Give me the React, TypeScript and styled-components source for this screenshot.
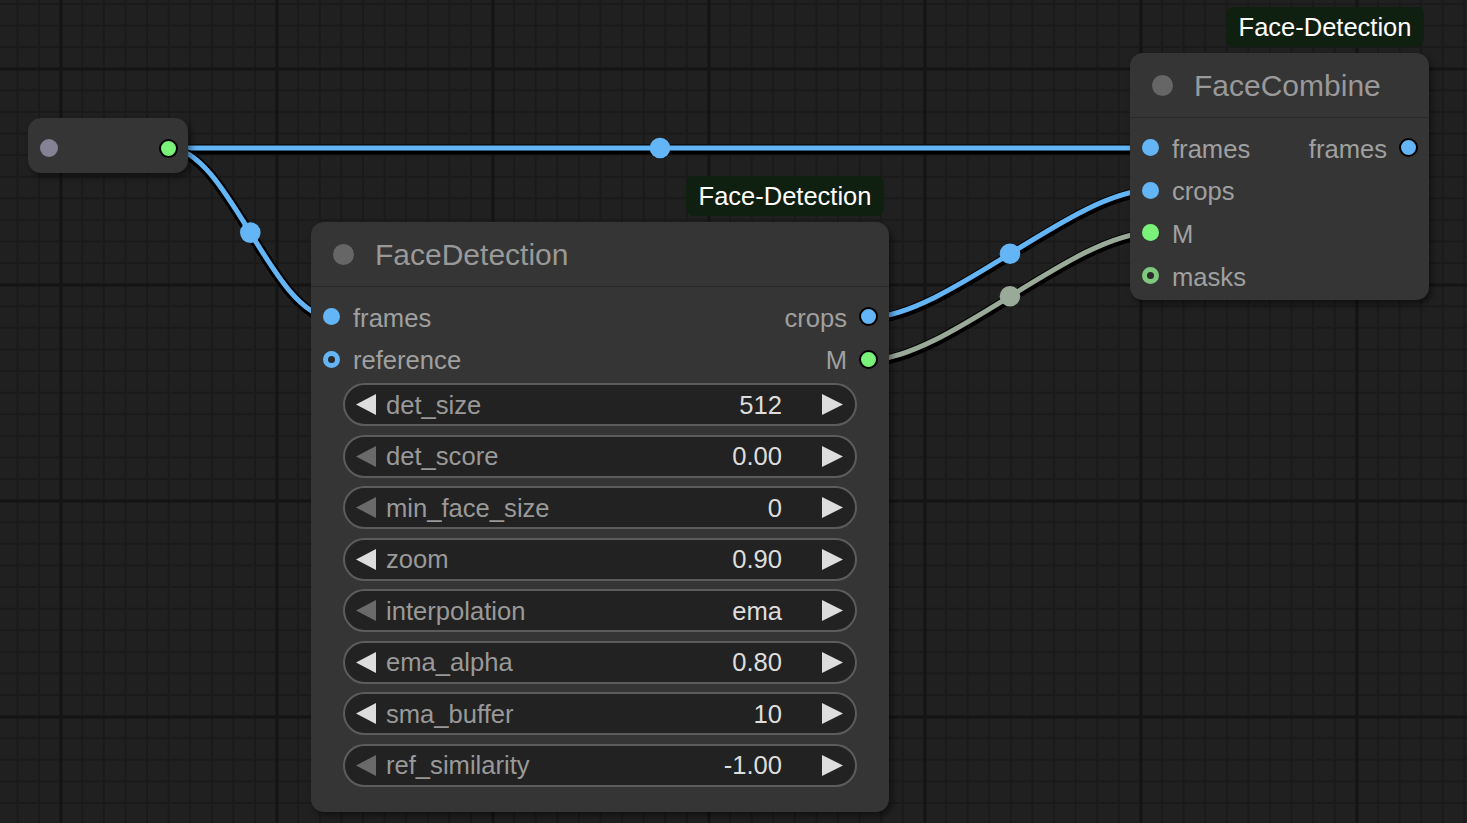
import React from 'react'
import styled, { createGlobalStyle } from 'styled-components'

const BLUE = '#64b5f6'
const GREEN = '#7af27a'
const MASK = '#7fc97f'
const LINK_M = '#9aaa99'

const GlobalStyle = createGlobalStyle`
  html, body {
    margin: 0;
    padding: 0;
    background: #1f1f1f;
    overflow: hidden;
  }
  body {
    font-family: 'Liberation Sans', Arial, sans-serif;
  }
`

const Canvas = styled.div`
  position: relative;
  width: 1467px;
  height: 823px;
  overflow: hidden;
  background-color: #202020;
  background-image:
    linear-gradient(90deg, #141414 3px, transparent 3px),
    linear-gradient(#141414 3px, transparent 3px),
    linear-gradient(90deg, #1a1a1a 2px, transparent 2px),
    linear-gradient(#1a1a1a 2px, transparent 2px);
  background-size: 216px 100%, 100% 216px, 21.6px 100%, 100% 21.6px;
  background-position: 59.5px 0, 0 67.5px, 16.5px 0, 0 3px;
`

const LinkLayer = styled.svg`
  position: absolute;
  inset: 0;
  width: 100%;
  height: 100%;
`

const NodeBox = styled.div<{ $x: number; $y: number; $w: number; $h: number }>`
  position: absolute;
  left: ${p => p.$x}px;
  top: ${p => p.$y}px;
  width: ${p => p.$w}px;
  height: ${p => p.$h}px;
  box-sizing: border-box;
  background: #353535;
  border-radius: 13px;
  box-shadow: 3px 4px 6px rgba(0, 0, 0, 0.45);
  display: flex;
  flex-direction: column;
`

const NodeHeader = styled.div`
  height: 64px;
  flex: none;
  display: flex;
  align-items: center;
  padding-left: 22px;
  border-bottom: 1px solid #2a2a2a;
`

const TitleDot = styled.span`
  width: 21px;
  height: 21px;
  border-radius: 50%;
  background: #666;
  margin-right: 21px;
`

const Title = styled.span`
  font-size: 30px;
  color: #999;
  padding-top: 2px;
`

const NodeBody = styled.div<{ $bottom: number }>`
  display: flex;
  flex-direction: column;
  padding: 8.5px 0 ${p => p.$bottom}px;
`

const SlotRow = styled.div`
  height: 42.6px;
  display: flex;
  align-items: center;
  justify-content: space-between;
`

const SlotSide = styled.div<{ $out?: boolean }>`
  display: flex;
  align-items: center;
  gap: ${p => (p.$out ? 12 : 13)}px;
  padding: ${p => (p.$out ? '0 11px 0 0' : '0 0 0 12px')};
`

const Dot = styled.span<{ $color: string; $ring?: boolean; $out?: boolean }>`
  box-sizing: border-box;
  flex: none;
  width: ${p => (p.$out ? 19 : 17)}px;
  height: ${p => (p.$out ? 19 : 17)}px;
  border-radius: 50%;
  background: ${p => (p.$ring ? '#2a2a2a' : p.$color)};
  border: ${p => (p.$ring ? `5.5px solid ${p.$color}` : p.$out ? '2px solid #000' : 'none')};
`

const SlotLabel = styled.span`
  font-size: 25.6px;
  color: #a0a0a0;
  padding-top: 3px;
`

const WidgetList = styled.div`
  display: flex;
  flex-direction: column;
  gap: 8.5px;
  padding: 2.5px 32px 0;
`

const Widget = styled.div`
  box-sizing: border-box;
  height: 43px;
  border: 2px solid #5c5c5c;
  border-radius: 22px;
  background: #222;
  display: flex;
  align-items: center;
  padding: 0 12px 0 11px;
`

const Arrow = styled.svg<{ $dim?: boolean }>`
  width: 21px;
  height: 21px;
  flex: none;
  fill: ${p => (p.$dim ? '#6a6a6a' : '#ddd')};
`

const WidgetLabel = styled.span`
  flex: 1;
  margin-left: 9px;
  font-size: 25.6px;
  color: #999;
  padding-top: 1px;
`

const WidgetValue = styled.span`
  font-size: 25.6px;
  color: #ddd;
  margin-right: 40px;
  padding-top: 1px;
`

const Badge = styled.div`
  position: absolute;
  right: 5px;
  bottom: calc(100% + 6px);
  height: 40px;
  padding: 0 12.5px;
  display: flex;
  align-items: center;
  background: #0f1f10;
  border-radius: 8px;
  font-size: 25.5px;
  color: #fff;
  white-space: nowrap;
`

const Reroute = styled.div`
  position: absolute;
  left: 28px;
  top: 118px;
  width: 160px;
  height: 55px;
  box-sizing: border-box;
  border-radius: 13px;
  background: #353535;
  box-shadow: 3px 4px 6px rgba(0, 0, 0, 0.45);
  display: flex;
  align-items: center;
  justify-content: space-between;
  padding: 5px 10px 0 12px;
`

const RerouteIn = styled.span`
  width: 18px;
  height: 18px;
  border-radius: 50%;
  background: #858296;
`

const LeftArrow = ({ dim }: { dim?: boolean }) => (
  <Arrow $dim={dim} viewBox="0 0 21 21">
    <polygon points="20,0 20,21 0,10.5" />
  </Arrow>
)

const RightArrow = () => (
  <Arrow viewBox="0 0 21 21">
    <polygon points="0,0 0,21 21,10.5" />
  </Arrow>
)

interface LinkProps {
  d: string
  color: string
  mx: number
  my: number
}

const Link: React.FC<LinkProps> = ({ d, color, mx, my }) => (
  <g>
    <path d={d} stroke="#000" strokeWidth={10} fill="none" transform="translate(0.5 1.5)" />
    <path d={d} stroke={color} strokeWidth={5} fill="none" />
    <circle cx={mx} cy={my} r={10.3} fill={color} />
  </g>
)

const widgets: { label: string; value: string; dim?: boolean }[] = [
  { label: 'det_size', value: '512' },
  { label: 'det_score', value: '0.00', dim: true },
  { label: 'min_face_size', value: '0', dim: true },
  { label: 'zoom', value: '0.90' },
  { label: 'interpolation', value: 'ema', dim: true },
  { label: 'ema_alpha', value: '0.80' },
  { label: 'sma_buffer', value: '10' },
  { label: 'ref_similarity', value: '-1.00', dim: true },
]

export default function App() {
  return (
    <>
      <GlobalStyle />
      <Canvas>
        <LinkLayer viewBox="0 0 1467 823">
          <Link d="M169 148 L1151 148" color={BLUE} mx={660} my={148} />
          <Link d="M169 148 C227.7 148 272.8 317.3 331.5 317.3" color={BLUE} mx={250.3} my={232.6} />
          <Link d="M869 317.3 C946 317.3 1074 190.1 1151 190.1" color={BLUE} mx={1010} my={253.7} />
          <Link d="M869 359.9 C946 359.9 1074 232.7 1151 232.7" color={LINK_M} mx={1010} my={296.3} />
        </LinkLayer>

        <Reroute>
          <RerouteIn />
          <Dot $color={GREEN} $out />
        </Reroute>

        <NodeBox $x={311} $y={222} $w={578} $h={590}>
          <Badge>Face-Detection</Badge>
          <NodeHeader>
            <TitleDot />
            <Title>FaceDetection</Title>
          </NodeHeader>
          <NodeBody $bottom={0}>
            <SlotRow>
              <SlotSide>
                <Dot $color={BLUE} />
                <SlotLabel>frames</SlotLabel>
              </SlotSide>
              <SlotSide $out>
                <SlotLabel>crops</SlotLabel>
                <Dot $color={BLUE} $out />
              </SlotSide>
            </SlotRow>
            <SlotRow>
              <SlotSide>
                <Dot $color={BLUE} $ring />
                <SlotLabel>reference</SlotLabel>
              </SlotSide>
              <SlotSide $out>
                <SlotLabel>M</SlotLabel>
                <Dot $color={GREEN} $out />
              </SlotSide>
            </SlotRow>
          </NodeBody>
          <WidgetList>
            {widgets.map(w => (
              <Widget key={w.label}>
                <LeftArrow dim={w.dim} />
                <WidgetLabel>{w.label}</WidgetLabel>
                <WidgetValue>{w.value}</WidgetValue>
                <RightArrow />
              </Widget>
            ))}
          </WidgetList>
        </NodeBox>

        <NodeBox $x={1130} $y={53} $w={299} $h={247}>
          <Badge>Face-Detection</Badge>
          <NodeHeader>
            <TitleDot />
            <Title>FaceCombine</Title>
          </NodeHeader>
          <NodeBody $bottom={3}>
            <SlotRow>
              <SlotSide>
                <Dot $color={BLUE} />
                <SlotLabel>frames</SlotLabel>
              </SlotSide>
              <SlotSide $out>
                <SlotLabel>frames</SlotLabel>
                <Dot $color={BLUE} $out />
              </SlotSide>
            </SlotRow>
            <SlotRow>
              <SlotSide>
                <Dot $color={BLUE} />
                <SlotLabel>crops</SlotLabel>
              </SlotSide>
            </SlotRow>
            <SlotRow>
              <SlotSide>
                <Dot $color={GREEN} />
                <SlotLabel>M</SlotLabel>
              </SlotSide>
            </SlotRow>
            <SlotRow>
              <SlotSide>
                <Dot $color={MASK} $ring />
                <SlotLabel>masks</SlotLabel>
              </SlotSide>
            </SlotRow>
          </NodeBody>
        </NodeBox>
      </Canvas>
    </>
  )
}
